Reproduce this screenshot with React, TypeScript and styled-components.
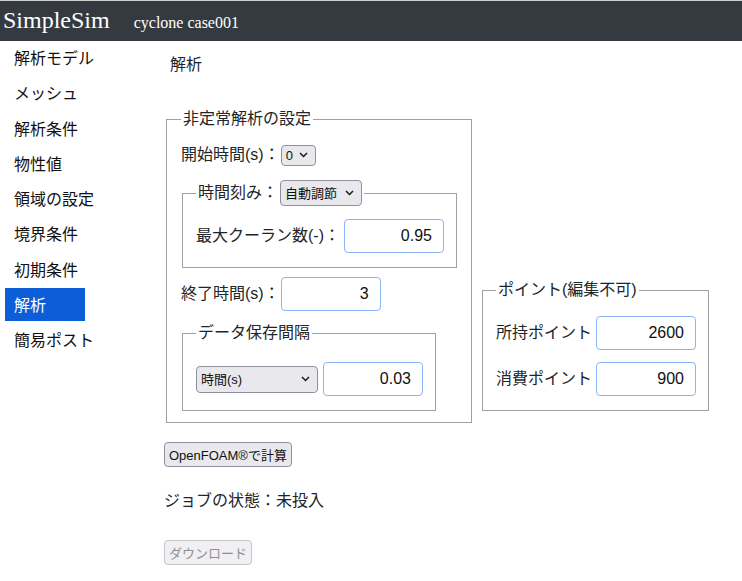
import styled, { createGlobalStyle } from "styled-components";

const GlobalStyle = createGlobalStyle`
  body {
    margin: 0;
    font-family: "Liberation Sans", "Noto Sans CJK JP", sans-serif;
    font-size: 16px;
    color: #212529;
    background: #ffffff;
  }
`;

const menu = [
  "解析モデル",
  "メッシュ",
  "解析条件",
  "物性値",
  "領域の設定",
  "境界条件",
  "初期条件",
  "解析",
  "簡易ポスト",
];

function Dropdown({ label, w, h, ml = 6 }: { label: string; w: number; h: number; ml?: number }) {
  return (
    <SelectWrap $ml={ml}>
      <Select $w={w} $h={h}>
        <option>{label}</option>
      </Select>
      <Chevron width="9" height="6" viewBox="0 0 9 6">
        <path d="M1 1 L4.5 4.5 L8 1" fill="none" stroke="#1a1a1a" strokeWidth="1.5" />
      </Chevron>
    </SelectWrap>
  );
}

export default function App() {
  return (
    <>
      <GlobalStyle />
      <Header>
        <Brand>SimpleSim</Brand>
        <CaseName>cyclone case001</CaseName>
      </Header>
      <Body>
        <Sidebar>
          {menu.map((m) => (
            <NavItem key={m} $active={m === "解析"}>
              {m}
            </NavItem>
          ))}
        </Sidebar>
        <Main>
          <Title>解析</Title>
          <Panels>
            <Fieldset $pl={14} $pt={12} $pr={14} $pb={11}>
              <Legend>非定常解析の設定</Legend>
              <Row>
                <Label>開始時間(s)：</Label>
                <Dropdown label="0" w={35} h={21} ml={1} />
              </Row>
              <SubFieldset $mt={13} $pt={13} $pb={14}>
                <Legend>
                  <Row>
                    <Label>時間刻み：</Label>
                    <Dropdown label="自動調節" w={82} h={26} ml={2} />
                  </Row>
                </Legend>
                <Row>
                  <Label>最大クーラン数(-)：</Label>
                  <NumInput defaultValue="0.95" $ml={4} />
                </Row>
              </SubFieldset>
              <Row $mt={9}>
                <Label>終了時間(s)：</Label>
                <NumInput defaultValue="3" $ml={1} />
              </Row>
              <SubFieldset $mt={10} $pt={17} $pb={14}>
                <Legend>データ保存間隔</Legend>
                <Row>
                  <Dropdown label="時間(s)" w={122} h={27} ml={0} />
                  <NumInput defaultValue="0.03" $ml={5} />
                </Row>
              </SubFieldset>
            </Fieldset>
            <PointBox $pl={13} $pt={14} $pr={12} $pb={14}>
              <Legend>ポイント(編集不可)</Legend>
              <Row>
                <Label>所持ポイント</Label>
                <NumInput defaultValue="2600" $ml={4} readOnly />
              </Row>
              <Row $mt={12}>
                <Label>消費ポイント</Label>
                <NumInput defaultValue="900" $ml={4} readOnly />
              </Row>
            </PointBox>
          </Panels>
          <Button $mt={19}>OpenFOAM®で計算</Button>
          <Status>ジョブの状態：未投入</Status>
          <Button $mt={27} disabled>
            ダウンロード
          </Button>
        </Main>
      </Body>
    </>
  );
}

const Header = styled.header`
  box-sizing: border-box;
  height: 41px;
  border-top: 1px solid #cfcfcf;
  background: #343a40;
  display: flex;
  align-items: baseline;
  padding: 3px 0 0 3px;
  font-family: "Liberation Serif", serif;
  color: #ffffff;
`;

const Brand = styled.div`
  font-size: 24px;
  line-height: 32px;
`;

const CaseName = styled.div`
  font-size: 16px;
  margin-left: 24px;
`;

const Body = styled.div`
  display: flex;
`;

const Sidebar = styled.nav`
  width: 159px;
  flex-shrink: 0;
  padding: 0 0 0 5px;
  display: flex;
  flex-direction: column;
`;

const NavItem = styled.div<{ $active?: boolean }>`
  width: 80px;
  box-sizing: border-box;
  padding: 6px 9px;
  line-height: 21px;
  margin-bottom: 2.3px;
  font-family: "Noto Sans CJK JP", sans-serif;
  font-size: 16px;
  white-space: nowrap;
  color: ${(p) => (p.$active ? "#ffffff" : "#111111")};
  background: ${(p) => (p.$active ? "#0b5ed7" : "transparent")};
`;

const Main = styled.main`
  display: flex;
  flex-direction: column;
  align-items: flex-start;
`;

const Title = styled.div`
  margin: 12px 0 0 6px;
  line-height: 24px;
  font-size: 16px;
`;

const Panels = styled.div`
  display: flex;
  align-items: flex-end;
  gap: 10px;
  margin: 30px 0 0 2px;
`;

const Fieldset = styled.fieldset<{ $pl: number; $pt: number; $pr: number; $pb: number }>`
  margin: 0;
  min-width: 0;
  border: 1px solid #a0a0a0;
  padding: ${(p) => `${p.$pt}px ${p.$pr}px ${p.$pb}px ${p.$pl}px`};
  display: flex;
  flex-direction: column;
  align-items: flex-start;
`;

const PointBox = styled(Fieldset)`
  margin-bottom: 12px;
`;

const SubFieldset = styled.fieldset<{ $mt: number; $pt: number; $pb: number }>`
  margin: ${(p) => p.$mt}px 0 0 1px;
  min-width: 0;
  border: 1px solid #a0a0a0;
  padding: ${(p) => `${p.$pt}px 12px ${p.$pb}px 13px`};
`;

const Legend = styled.legend`
  padding: 0 2px;
  line-height: 24px;
  font-size: 16px;
`;

const Row = styled.div<{ $mt?: number }>`
  display: flex;
  align-items: center;
  margin-top: ${(p) => p.$mt ?? 0}px;
`;

const Label = styled.span`
  font-size: 16px;
  line-height: 24px;
  white-space: nowrap;
`;

const SelectWrap = styled.span<{ $ml: number }>`
  position: relative;
  display: inline-flex;
  margin-left: ${(p) => p.$ml}px;
`;

const Select = styled.select<{ $w: number; $h: number }>`
  appearance: none;
  width: ${(p) => p.$w}px;
  height: ${(p) => p.$h}px;
  box-sizing: border-box;
  font-family: "Liberation Sans", "Noto Sans CJK JP", sans-serif;
  font-size: 13px;
  color: #111111;
  background-color: #e9e9ed;
  border: 1px solid #8f8f9d;
  border-radius: 4px;
  padding: 0 4px;
`;

const Chevron = styled.svg`
  position: absolute;
  right: 8px;
  top: 50%;
  margin-top: -3px;
  pointer-events: none;
`;

const NumInput = styled.input<{ $ml: number }>`
  width: 100px;
  height: 34px;
  box-sizing: border-box;
  margin-left: ${(p) => p.$ml}px;
  border: 1px solid #8ab4f8;
  border-radius: 4px;
  padding: 0 11px;
  text-align: right;
  font-family: "Liberation Sans", sans-serif;
  font-size: 16px;
  color: #111111;
  outline: none;
`;

const Button = styled.button<{ $mt: number }>`
  margin-top: ${(p) => p.$mt}px;
  height: 25px;
  padding: 0 4px;
  font-family: "Liberation Sans", "Noto Sans CJK JP", sans-serif;
  font-size: 13px;
  color: #111111;
  background: #e9e9ed;
  border: 1px solid #8f8f9d;
  border-radius: 4px;
  &:disabled {
    color: #8f8f96;
    background: #f0f0f3;
    border-color: #c4c4cc;
  }
`;

const Status = styled.div`
  margin-top: 22px;
  line-height: 24px;
  font-size: 16px;
`;
